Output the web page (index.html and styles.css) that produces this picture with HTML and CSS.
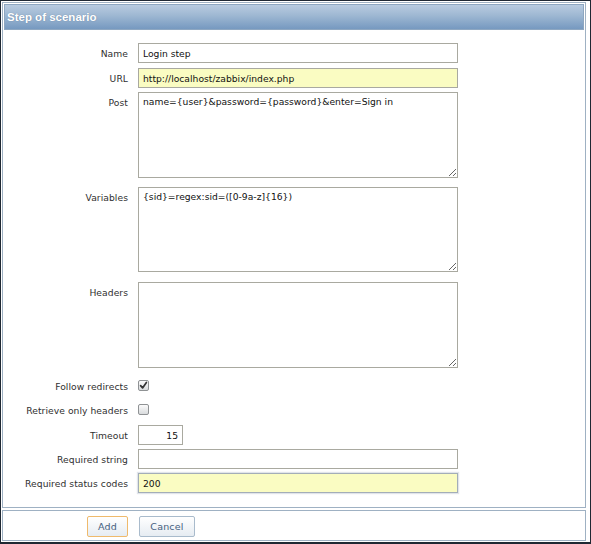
FILE: index.html
```html
<!DOCTYPE html>
<html lang="en">
<head>
<meta charset="utf-8">
<title>Step of scenario</title>
<link rel="stylesheet" href="styles.css">
</head>
<body>
<div class="frame">
  <div class="panel">
    <div class="header">Step of scenario</div>
    <form class="form">
      <div class="row">
        <label class="label">Name</label>
        <input class="field" type="text" value="Login step">
      </div>
      <div class="row mt1">
        <label class="label">URL</label>
        <input class="field yellow" type="text" value="http://localhost/zabbix/index.php">
      </div>
      <div class="row">
        <label class="label">Post</label>
        <textarea class="area tall" spellcheck="false">name={user}&amp;password={password}&amp;enter=Sign in</textarea>
      </div>
      <div class="row mt5">
        <label class="label">Variables</label>
        <textarea class="area" spellcheck="false">{sid}=regex:sid=([0-9a-z]{16})</textarea>
      </div>
      <div class="row mt6">
        <label class="label">Headers</label>
        <textarea class="area tall" spellcheck="false"></textarea>
      </div>
      <div class="row mt4">
        <label class="label">Follow redirects</label>
        <span class="check" role="checkbox" aria-checked="true"><svg width="11" height="11" viewBox="0 0 11 11"><path d="M2.6 5.6 L4.6 7.9 L8.4 2.4" fill="none" stroke="#333" stroke-width="1.7" stroke-linecap="round" stroke-linejoin="round"/></svg></span>
      </div>
      <div class="row">
        <label class="label">Retrieve only headers</label>
        <span class="check" role="checkbox" aria-checked="false"></span>
      </div>
      <div class="row mt1">
        <label class="label">Timeout</label>
        <input class="field short" type="text" value="15">
      </div>
      <div class="row">
        <label class="label">Required string</label>
        <input class="field" type="text" value="">
      </div>
      <div class="row">
        <label class="label">Required status codes</label>
        <input class="field yellow focus" type="text" value="200">
      </div>
    </form>
  </div>
  <div class="footer">
    <button class="btn btn-add" type="button">Add</button>
    <button class="btn btn-cancel" type="button">Cancel</button>
  </div>
</div>
</body>
</html>
```

FILE: styles.css
```css
html, body {
  margin: 0;
  padding: 0;
  background: #ffffff;
}

body {
  font-family: "DejaVu Sans", "Noto Sans", sans-serif;
  font-size: 9.2px;
  color: #303030;
}

.frame {
  width: 591px;
  height: 544px;
  box-sizing: border-box;
  border: 1px solid #1f2833;
  border-bottom-width: 2px;
  padding: 1px 4px 1px 1px;
  display: flex;
  flex-direction: column;
  background: #ffffff;
}

.panel {
  flex: 1;
  border: 1px solid #9fb1c3;
  display: flex;
  flex-direction: column;
}

.header {
  margin: 1px 1px 0 1px;
  height: 26px;
  box-sizing: border-box;
  border: 1px solid #8ea7c1;
  background: linear-gradient(to bottom, #b8cbe0 0%, #9db7d2 45%, #7699c0 100%);
  color: #ffffff;
  font-family: "Liberation Sans", Arial, sans-serif;
  font-weight: bold;
  font-size: 11.5px;
  line-height: 24px;
  padding-left: 2px;
  text-shadow: 0 0 1px rgba(40, 60, 90, 0.45);
}

.form {
  margin: 0;
  padding-top: 13px;
  display: flex;
  flex-direction: column;
  gap: 4px;
}

.row {
  display: grid;
  grid-template-columns: 125px 320px;
  column-gap: 10px;
  align-items: start;
}

.mt1 { margin-top: 1px; }
.mt4 { margin-top: 4px; }
.mt5 { margin-top: 5px; }
.mt6 { margin-top: 6px; }

.label {
  text-align: right;
  height: 20px;
  line-height: 19px;
  padding-top: 1px;
  box-sizing: border-box;
  white-space: nowrap;
  letter-spacing: 0.05px;
}

.field {
  box-sizing: border-box;
  height: 20px;
  width: 320px;
  margin: 0;
  border: 1px solid #a9a9a0;
  background: #ffffff;
  font-family: "DejaVu Sans", "Noto Sans", sans-serif;
  font-size: 9.2px;
  color: #111111;
  padding: 0 4px;
  outline: none;
}

.yellow {
  background: #fafcc2;
}

.focus {
  border-color: #a3adb8;
  box-shadow: 0 0 1px 1px rgba(170, 180, 195, 0.35);
}

.short {
  width: 45px;
  text-align: right;
}

.area {
  box-sizing: border-box;
  width: 320px;
  height: 85px;
  margin: 0;
  border: 1px solid #a9a9a0;
  background: #ffffff;
  font-family: "DejaVu Sans", "Noto Sans", sans-serif;
  font-size: 9.2px;
  line-height: 14px;
  color: #111111;
  padding: 2px 4px;
  resize: both;
  outline: none;
  display: block;
}

.tall {
  height: 86px;
}

.check {
  display: block;
  width: 11px;
  height: 11px;
  box-sizing: border-box;
  margin-top: 4px;
  border: 1px solid #8f9294;
  border-radius: 2px;
  background: linear-gradient(to bottom, #fbfbfb, #d9dbdd);
}

.check svg {
  display: block;
  margin: -1px 0 0 -1px;
}

.footer {
  margin-top: 2px;
  height: 31px;
  box-sizing: border-box;
  border: 1px solid #9fb1c3;
  padding: 5px 0 0 84px;
  display: flex;
  align-items: flex-start;
  gap: 11px;
}

.btn {
  height: 21px;
  box-sizing: border-box;
  margin: 0;
  padding: 0;
  border: 1px solid #a9bbcc;
  border-radius: 2px;
  background: linear-gradient(to bottom, #ffffff, #e6ecf2);
  color: #45617f;
  font-family: "DejaVu Sans", "Noto Sans", sans-serif;
  font-size: 9.5px;
  letter-spacing: 0.2px;
}

.btn-add {
  width: 41px;
  border-color: #efba6c;
}

.btn-cancel {
  width: 56px;
}
```
